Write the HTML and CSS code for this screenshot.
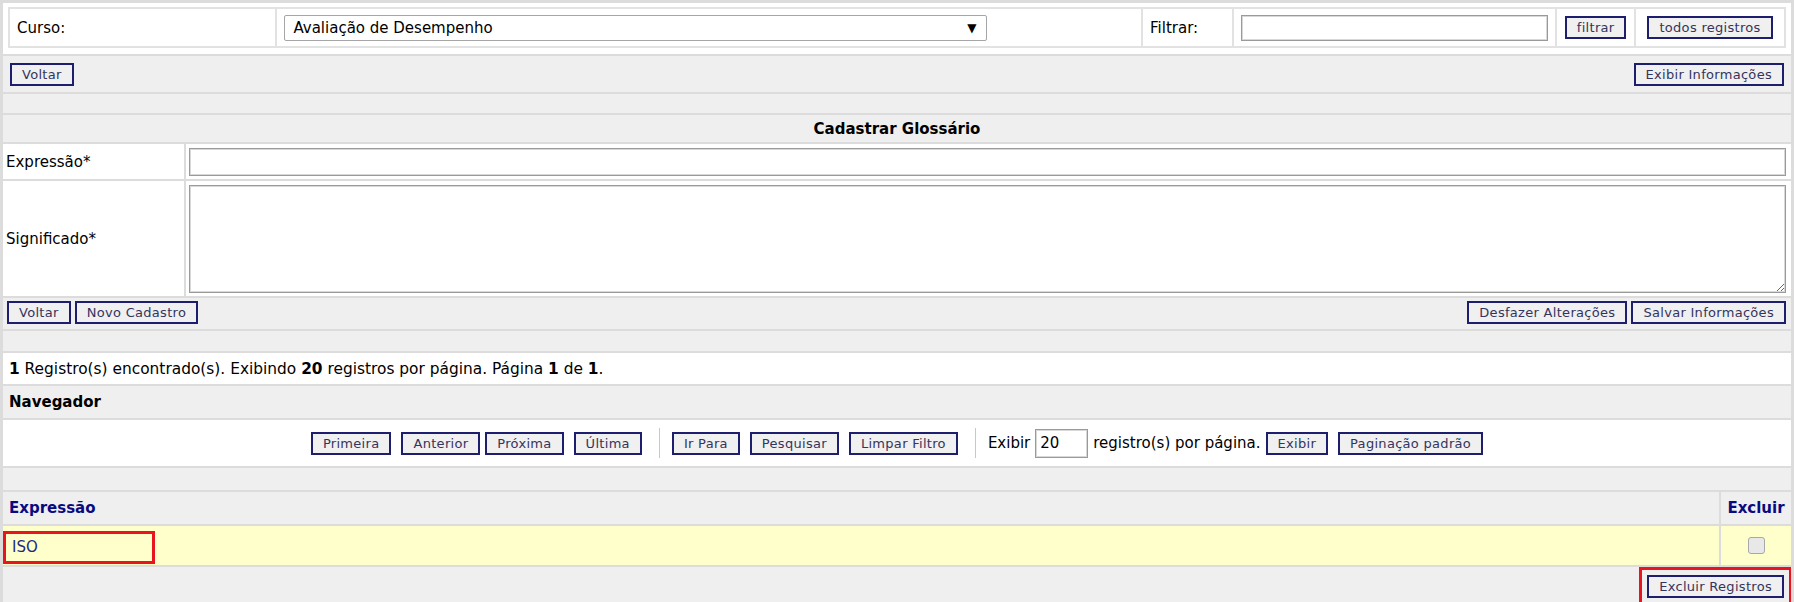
FILE: index.html
```html
<!DOCTYPE html>
<html lang="pt-BR">
<head>
  <meta charset="UTF-8" />
  <title>Cadastrar Glossário</title>
  <link rel="stylesheet" href="styles.css">
</head>
<body>
  <div class="page">

    <div class="filter-wrap">
      <table class="filter">
        <tr>
          <td class="f-curso">Curso:</td>
          <td class="f-select">
            <div class="select"><span>Avaliação de Desempenho</span><span class="arrow">▼</span></div>
          </td>
          <td class="f-filtrar">Filtrar:</td>
          <td class="f-input"><input type="text" class="field"></td>
          <td class="f-btn f-btn-a"><button class="btn">filtrar</button></td>
          <td class="f-btn f-btn-b"><button class="btn">todos registros</button></td>
        </tr>
      </table>
    </div>

    <div class="bar bar-top">
      <button class="btn">Voltar</button>
      <button class="btn">Exibir Informações</button>
    </div>

    <div class="spacer sp-1"></div>

    <table class="form">
      <tr>
        <th colspan="2" class="form-title">Cadastrar Glossário</th>
      </tr>
      <tr class="r-expr">
        <td class="lbl">Expressão*</td>
        <td class="val"><input type="text" class="field"></td>
      </tr>
      <tr class="r-sig">
        <td class="lbl">Significado*</td>
        <td class="val"><textarea class="field area"></textarea></td>
      </tr>
    </table>

    <div class="bar bar-actions">
      <div class="group">
        <button class="btn">Voltar</button>
        <button class="btn">Novo Cadastro</button>
      </div>
      <div class="group">
        <button class="btn">Desfazer Alterações</button>
        <button class="btn">Salvar Informações</button>
      </div>
    </div>

    <div class="spacer sp-2"></div>

    <div class="row info">
      <span><b>1</b> Registro(s) encontrado(s). Exibindo <b>20</b> registros por página. Página <b>1</b> de <b>1</b>.</span>
    </div>

    <div class="row head">Navegador</div>

    <div class="row nav">
      <button class="btn">Primeira</button>
      <span class="group tight">
        <button class="btn">Anterior</button>
        <button class="btn">Próxima</button>
      </span>
      <button class="btn">Última</button>
      <span class="sep"></span>
      <button class="btn">Ir Para</button>
      <button class="btn">Pesquisar</button>
      <button class="btn">Limpar Filtro</button>
      <span class="sep"></span>
      <span class="group per">
        <span>Exibir</span>
        <input type="text" class="field per-page" value="20">
        <span>registro(s) por página.</span>
        <button class="btn">Exibir</button>
      </span>
      <button class="btn">Paginação padrão</button>
    </div>

    <div class="spacer sp-3"></div>

    <table class="list">
      <thead>
        <tr>
          <th class="c-expr">Expressão</th>
          <th class="c-del">Excluir</th>
        </tr>
      </thead>
      <tbody>
        <tr class="hl">
          <td class="c-expr"><span class="mark">ISO</span></td>
          <td class="c-del"><input type="checkbox" class="check"></td>
        </tr>
      </tbody>
    </table>

    <div class="bar bar-foot">
      <button class="btn marked">Excluir Registros</button>
    </div>

  </div>
</body>
</html>
```

FILE: styles.css
```css
* {
  box-sizing: border-box;
}

body {
  margin: 0;
  padding: 0;
  background: #fff;
  color: #000;
  font-family: 'DejaVu Sans', Verdana, sans-serif;
  font-size: 15px;
}

.page {
  border: 3px solid #dcdcdc;
  border-bottom: none;
  background: #efefef;
  height: 602px;
  overflow: hidden;
}

/* botoes */

.btn {
  height: 23px;
  padding: 0 10px;
  background: #f0f0f0;
  border: 2px solid #1e1e6e;
  color: #34345e;
  font-family: 'DejaVu Sans', Verdana, sans-serif;
  font-size: 13px;
  letter-spacing: 0.3px;
  cursor: pointer;
}

.field {
  height: 28px;
  border: 1px solid #9a9a9a;
  box-shadow: inset 0 0 0 1px #d8d8d8;
  background: #fff;
  font-family: 'DejaVu Sans', Verdana, sans-serif;
  font-size: 15px;
  padding: 2px 6px;
}

/* filtro */

.filter-wrap {
  background: #fff;
  padding: 4px 5px 6px 5px;
}

.filter {
  width: 100%;
  border-collapse: collapse;
  border: 2px solid #e2e2e2;
}

.filter td {
  height: 39px;
  border-left: 2px solid #e2e2e2;
  padding: 0 7px;
}

.f-curso { width: 268px; }
.f-select { width: 866px; }
.f-filtrar { width: 91px; }
.f-input { width: 324px; }
.f-btn { text-align: center; }
.f-btn-a { width: 79px; }
.f-btn-b { width: 150px; }

.select {
  display: flex;
  align-items: center;
  justify-content: space-between;
  width: 703px;
  height: 26px;
  border: 1px solid #a6a6a6;
  border-radius: 2px;
  padding: 0 10px 0 8px;
}

.arrow {
  font-size: 12px;
}

.f-input .field {
  width: 100%;
  height: 26px;
}

/* barras */

.bar {
  display: flex;
  justify-content: space-between;
  align-items: flex-start;
  border-top: 2px solid #dcdcdc;
}

.bar-top {
  height: 38px;
  padding: 7px 7px 0 7px;
}

.bar-actions {
  height: 33px;
  padding: 3px 5px 0 4px;
}

.bar-foot {
  justify-content: flex-end;
  height: 34px;
  padding: 8px 7px 0 7px;
}

.group {
  display: flex;
  align-items: center;
  gap: 4px;
}

.spacer {
  border-top: 2px solid #dcdcdc;
}

.sp-1 { height: 21px; }
.sp-2 { height: 22px; }
.sp-3 { height: 24px; }

/* formulario */

.form {
  width: 100%;
  border-collapse: collapse;
}

.form td,
.form th {
  border-top: 2px solid #dcdcdc;
  padding: 0;
}

.form-title {
  height: 29px;
  font-weight: bold;
  text-align: center;
}

.lbl {
  width: 182px;
  background: #fff;
  padding-left: 3px !important;
}

.val {
  background: #fff;
  border-left: 2px solid #dcdcdc;
  padding: 3px 5px 3px 3px !important;
}

.r-expr td { height: 37px; }
.r-sig td { height: 116px; }

.val .field {
  display: block;
  width: 100%;
}

.area {
  height: 108px;
  resize: both;
}

/* paginacao */

.row {
  display: flex;
  align-items: center;
  border-top: 2px solid #dcdcdc;
  padding-left: 6px;
}

.info {
  height: 33px;
  background: #fff;
  font-size: 15.4px;
}

.head {
  height: 34px;
  font-weight: bold;
}

.nav {
  height: 48px;
  background: #fff;
  justify-content: center;
  gap: 10px;
  padding-left: 0;
}

.tight {
  gap: 5px;
}

.per {
  gap: 5px;
}

.sep {
  width: 1px;
  height: 30px;
  background: #c8c8c8;
  margin: 0 2px 0 7px;
}

.per-page {
  width: 53px;
  height: 29px;
  padding: 2px 4px;
}

/* lista */

.list {
  width: 100%;
  border-collapse: collapse;
}

.list th,
.list td {
  border-top: 2px solid #dcdcdc;
  padding: 0 6px;
}

.list th {
  height: 34px;
  color: #0a0a80;
  font-weight: bold;
  text-align: left;
}

.list .c-del {
  width: 71px;
  border-left: 2px solid #dcdcdc;
  text-align: center;
}

.hl td {
  height: 40px;
  background: #ffffcc;
}

.hl .c-expr {
  padding: 3px 0 0 0;
}

.mark {
  display: flex;
  align-items: center;
  width: 152px;
  height: 33px;
  border: 3px solid #e8141e;
  padding-left: 6px;
  color: #1c2a80;
}

.check {
  appearance: none;
  width: 17px;
  height: 17px;
  margin: 4px 0 0 0;
  border: 1px solid #a8a8a8;
  border-radius: 3px;
  background: #e8e8e8;
}

.marked {
  outline: 3px solid #e8141e;
  outline-offset: 5px;
}
```
